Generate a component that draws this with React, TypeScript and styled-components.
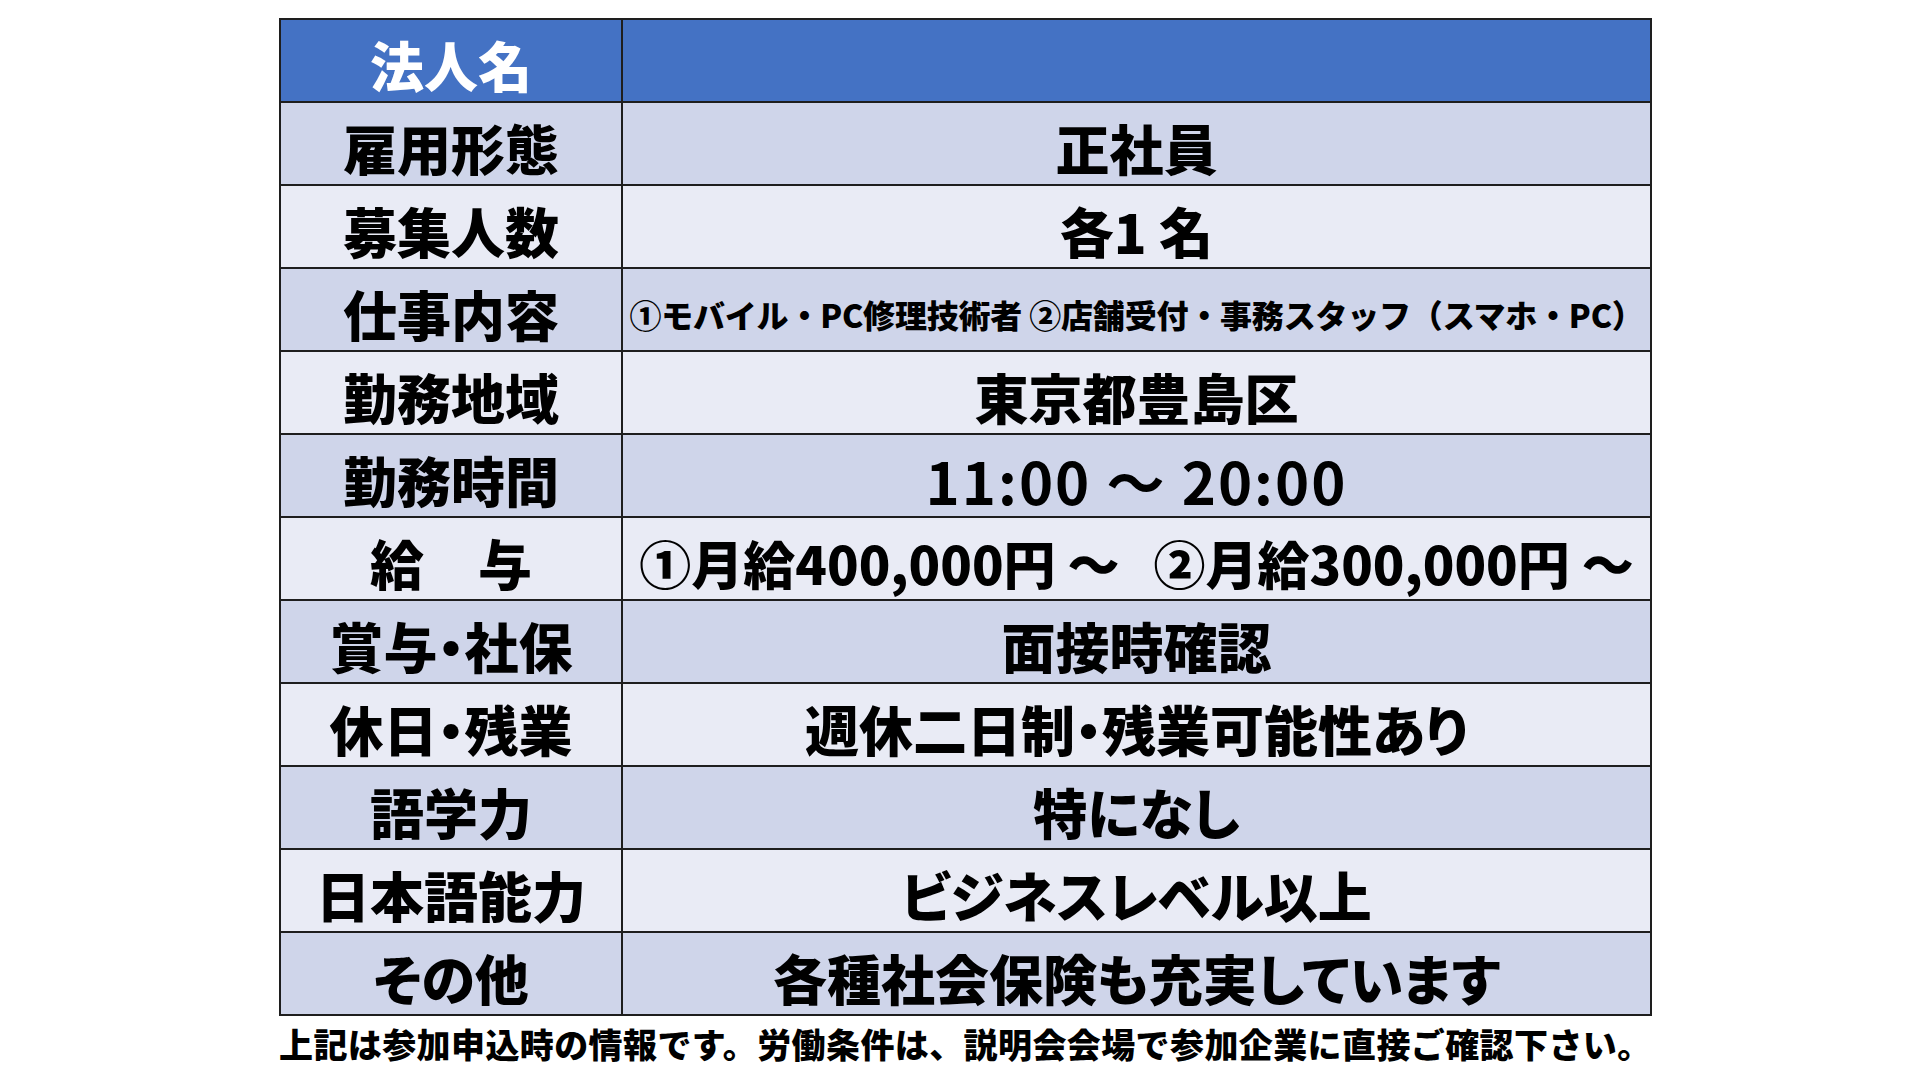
import React from "react";
import styled, { createGlobalStyle } from "styled-components";

const GlobalStyle = createGlobalStyle`
  html, body {
    margin: 0;
    padding: 0;
    background: #ffffff;
  }
  body {
    font-family: "Noto Sans CJK JP", "Noto Sans", sans-serif;
    color: #000;
  }
`;

const Page = styled.div`
  width: 1920px;
  height: 1080px;
  box-sizing: border-box;
  padding: 18px 0 0 279px;
  display: flex;
  flex-direction: column;
`;

const Table = styled.div`
  width: 1373px;
  box-sizing: border-box;
  display: grid;
  grid-template-columns: 340px minmax(0, 1fr);
  grid-auto-rows: 81px;
  gap: 2px;
  padding: 2px;
  background: #1e1e1e;
`;

type Tone = "header" | "dark" | "light";

const bg: Record<Tone, string> = {
  header: "#4472C4",
  dark: "#CFD5EA",
  light: "#E9EBF5",
};

const Cell = styled.div<{
  $tone: Tone;
  $size?: number;
  $weight?: number;
  $spacing?: number;
  $palt?: boolean;
}>`
  background: ${(p) => bg[p.$tone]};
  color: ${(p) => (p.$tone === "header" ? "#ffffff" : "#000000")};
  display: flex;
  align-items: center;
  justify-content: center;
  padding-top: 10px;
  box-sizing: border-box;
  font-family: "Noto Sans CJK JP", "Noto Sans", sans-serif;
  font-weight: ${(p) => p.$weight ?? 900};
  font-size: ${(p) => p.$size ?? 54}px;
  line-height: 1.2;
  white-space: pre;
  letter-spacing: ${(p) => p.$spacing ?? 0}px;
  font-feature-settings: ${(p) => (p.$palt === false ? "normal" : '"palt" 1')};
`;

const Gap = styled.span`
  display: inline-block;
  width: 34px;
`;

const Note = styled.p`
  margin: 8px 0 0 0;
  font-family: "Noto Sans CJK JP", "Noto Sans", sans-serif;
  font-weight: 900;
  font-size: 34px;
  line-height: 1.2;
  letter-spacing: 0.4px;
  white-space: nowrap;
`;

type Row = {
  label: string;
  value: React.ReactNode;
  size?: number;
  weight?: number;
  spacing?: number;
  palt?: boolean;
};

const rows: Row[] = [
  { label: "雇用形態", value: "正社員" },
  { label: "募集人数", value: "各1 名" },
  {
    label: "仕事内容",
    value: "①モバイル・PC修理技術者 ②店舗受付・事務スタッフ（スマホ・PC）",
    size: 32,
    spacing: -0.2,
    palt: false,
  },
  { label: "勤務地域", value: "東京都豊島区" },
  {
    label: "勤務時間",
    value: "11:00 ～ 20:00",
    size: 58,
    weight: 700,
    spacing: 2,
    palt: false,
  },
  {
    label: "給　与",
    value: (
      <>
        ①月給400,000円 ～<Gap />②月給300,000円 ～
      </>
    ),
    size: 52,
    palt: false,
  },
  { label: "賞与・社保", value: "面接時確認" },
  { label: "休日・残業", value: "週休二日制・残業可能性あり" },
  { label: "語学力", value: "特になし" },
  { label: "日本語能力", value: "ビジネスレベル以上" },
  { label: "その他", value: "各種社会保険も充実しています" },
];

export default function App() {
  return (
    <>
      <GlobalStyle />
      <Page>
        <Table>
          <Cell $tone="header">法人名</Cell>
          <Cell $tone="header" />
          {rows.map((r, i) => {
            const tone: Tone = i % 2 === 0 ? "dark" : "light";
            return (
              <React.Fragment key={r.label}>
                <Cell $tone={tone}>{r.label}</Cell>
                <Cell
                  $tone={tone}
                  $size={r.size}
                  $weight={r.weight}
                  $spacing={r.spacing}
                  $palt={r.palt}
                >
                  {r.value}
                </Cell>
              </React.Fragment>
            );
          })}
        </Table>
        <Note>
          上記は参加申込時の情報です。労働条件は、説明会会場で参加企業に直接ご確認下さい。
        </Note>
      </Page>
    </>
  );
}
